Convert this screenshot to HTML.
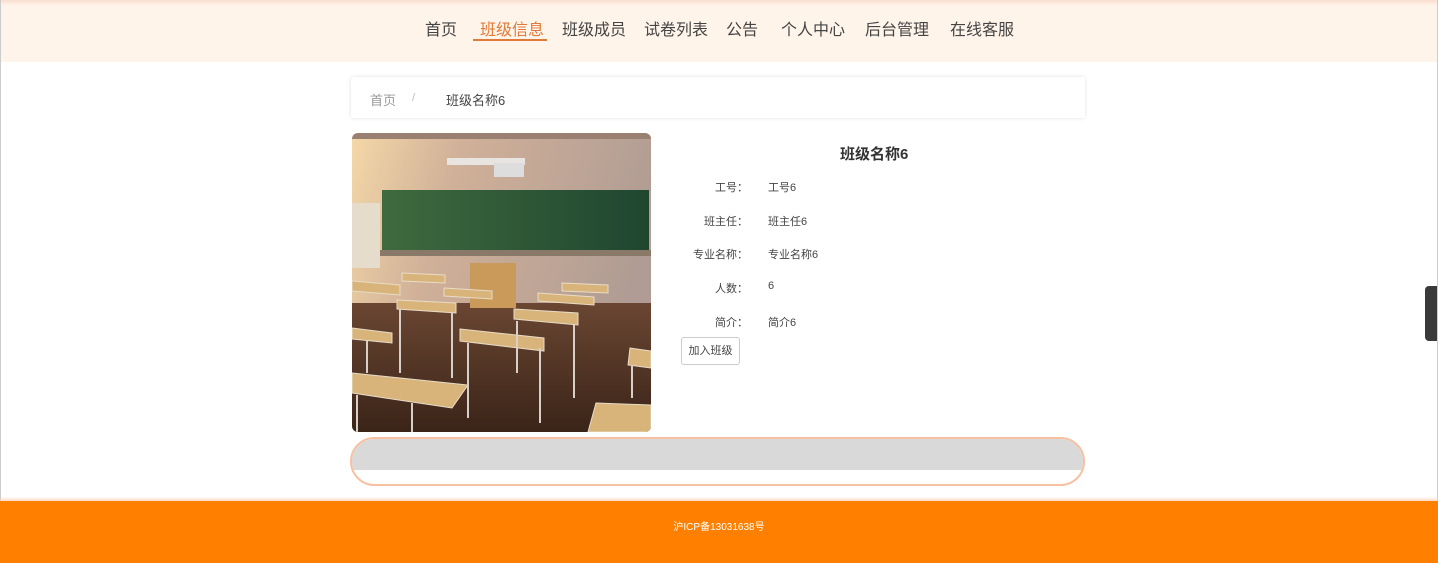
<!DOCTYPE html>
<html><head><meta charset="utf-8">
<style>
*{margin:0;padding:0;box-sizing:border-box}
body{width:1438px;height:563px;overflow:hidden;background:#fff;font-family:"Liberation Sans","Noto Sans CJK SC",sans-serif;position:relative}
.fr{position:absolute;top:0;bottom:0;width:1px;background:#ccc}
.nav{position:absolute;left:0;top:0;width:1438px;height:62px;background:#fff4ea;box-shadow:inset 0 4px 5px -2px #f8d8c8}
.nav a{position:absolute;top:16px;font-size:16px;color:#444;text-decoration:none;white-space:nowrap}
.nav a.on{color:#e07a38}
.ul{position:absolute;left:473px;top:39px;width:74px;height:2px;background:#e07a38}
.bc{position:absolute;left:351px;top:77px;width:734px;height:41px;background:#fff;box-shadow:0 0 4px rgba(0,0,0,.12);border-radius:2px;font-size:13px}
.bc span{position:absolute;top:13px}
.img{position:absolute;left:352px;top:133px;width:299px;height:299px;border-radius:6px;overflow:hidden}
.t{position:absolute;left:840px;top:143px;font-size:15px;font-weight:bold;color:#333}
.l{position:absolute;width:96px;left:652px;text-align:right;font-size:11px;color:#444}
.v{position:absolute;left:768px;font-size:11px;color:#444}
.btn{position:absolute;left:681px;top:337px;width:59px;height:28px;border:1px solid #ccc;border-radius:3px;font-size:11px;color:#444;text-align:center;line-height:26px;background:#fff}
.bar{position:absolute;left:350px;top:437px;width:735px;height:49px;border:2px solid #f7c0a0;border-radius:25px;overflow:hidden;background:#fff}
.bar div{height:31px;background:#d9d9d9}
.foot{position:absolute;left:0;top:501px;width:1438px;height:62px;background:#ff8000;box-shadow:0 -2px 3px #fbd8c0;color:#fff;font-size:10px;text-align:center;line-height:54px}
.wid{position:absolute;left:1425px;top:286px;width:12px;height:55px;background:#3a3a3a;border-radius:4px 0 0 4px}
</style></head><body>
<div class="nav">
<a style="left:425px">首页</a>
<a class="on" style="left:480px">班级信息</a>
<a style="left:562px">班级成员</a>
<a style="left:644px">试卷列表</a>
<a style="left:726px">公告</a>
<a style="left:781px">个人中心</a>
<a style="left:865px">后台管理</a>
<a style="left:950px">在线客服</a>
<div class="ul"></div>
</div>
<div class="fr" style="left:0"></div><div class="fr" style="right:0"></div>
<div class="bc"><span style="left:19px;color:#999">首页</span><span style="left:61px;color:#bbb;font-size:11px;top:15px">/</span><span style="left:95px;color:#444">班级名称6</span></div>
<div class="img">
<svg width="299" height="299" viewBox="0 0 299 299">
<defs>
<linearGradient id="w" x1="0" y1="0" x2="1" y2="0.3"><stop offset="0" stop-color="#f5d8a8"/><stop offset=".35" stop-color="#d0b098"/><stop offset="1" stop-color="#b09c94"/></linearGradient>
<linearGradient id="f" x1="0" y1="0" x2="0" y2="1"><stop offset="0" stop-color="#6a4632"/><stop offset="1" stop-color="#3a2418"/></linearGradient>
<linearGradient id="c" x1="0" y1="0" x2="1" y2="0"><stop offset="0" stop-color="#3f6a3e"/><stop offset="1" stop-color="#1f4630"/></linearGradient>
</defs>
<rect width="299" height="299" fill="url(#w)"/>
<rect y="0" width="299" height="6" fill="#9a8070"/>
<rect x="0" y="70" width="28" height="65" fill="#e6dccb"/>
<rect x="30" y="57" width="267" height="65" fill="url(#c)"/>
<rect x="28" y="117" width="271" height="6" fill="#8a7868"/>
<rect x="95" y="25" width="78" height="7" fill="#e8e4e0"/>
<rect x="142" y="30" width="30" height="14" fill="#ddd"/>
<rect x="0" y="170" width="299" height="129" fill="url(#f)"/>
<rect x="118" y="130" width="46" height="45" fill="#c99a5a"/>
<g fill="#d8b47a" stroke="#e8dcc8" stroke-width="1">
<polygon points="0,148 48,152 48,162 0,158"/>
<polygon points="50,140 93,142 93,150 50,148"/>
<polygon points="92,155 140,158 140,166 92,163"/>
<polygon points="45,167 104,170 104,180 45,176"/>
<polygon points="210,150 256,152 256,160 210,158"/>
<polygon points="186,160 242,164 242,172 186,168"/>
<polygon points="162,176 226,180 226,192 162,186"/>
<polygon points="0,195 40,200 40,210 0,206"/>
<polygon points="108,196 192,205 192,218 108,208"/>
<polygon points="0,240 116,252 100,275 0,260"/>
<polygon points="278,215 299,218 299,235 276,232"/>
<polygon points="244,270 299,272 299,299 236,299"/>
</g>
<g stroke="#d8d0c8" stroke-width="2" fill="none">
<line x1="48" y1="176" x2="48" y2="240"/><line x1="100" y1="180" x2="100" y2="245"/>
<line x1="116" y1="210" x2="116" y2="285"/><line x1="188" y1="215" x2="188" y2="290"/>
<line x1="165" y1="188" x2="165" y2="240"/><line x1="222" y1="192" x2="222" y2="265"/>
<line x1="15" y1="208" x2="15" y2="240"/><line x1="280" y1="232" x2="280" y2="265"/>
<line x1="60" y1="270" x2="60" y2="299"/><line x1="5" y1="262" x2="5" y2="299"/>
</g>
</svg>
</div>
<div class="t">班级名称6</div>
<div class="l" style="top:179px">工号：</div><div class="v" style="top:179px">工号6</div>
<div class="l" style="top:213px">班主任：</div><div class="v" style="top:213px">班主任6</div>
<div class="l" style="top:246px">专业名称：</div><div class="v" style="top:246px">专业名称6</div>
<div class="l" style="top:280px">人数：</div><div class="v" style="top:280px">6</div>
<div class="l" style="top:314px">简介：</div><div class="v" style="top:314px">简介6</div>
<div class="btn">加入班级</div>
<div class="bar"><div></div></div>
<div class="foot">沪ICP备13031638号</div>
<div class="wid"></div>
</body></html>
